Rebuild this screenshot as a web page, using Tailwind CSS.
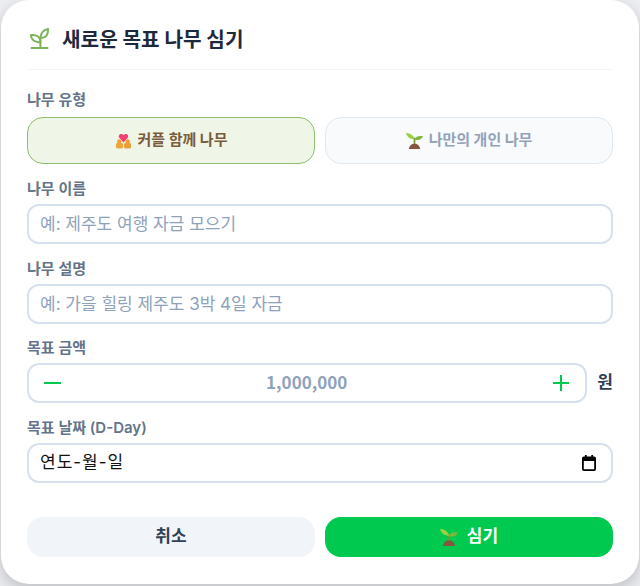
<!DOCTYPE html>
<html lang="ko">
<head>
    <meta charset="UTF-8">
    <title>새로운 목표 나무 심기</title>
    <script src="https://cdn.jsdelivr.net/npm/@tailwindcss/browser@4"></script>
</head>
<body class="h-[586px] w-[640px] overflow-hidden bg-[#eceef2] font-['Inter','Noto_Sans_CJK_KR',sans-serif]">
    <!-- Modal -->
    <div class="mx-px h-[584px] rounded-[28px] bg-white px-[26px] pt-[24px] shadow-[0_6px_16px_rgba(0,0,0,0.2)]">
        <!-- Header -->
        <div class="flex h-[46px] items-start gap-[11px] border-b border-[#f1f5f9]">
            <svg class="mt-[3px] h-6 w-6" viewBox="0 0 24 24" fill="none" stroke="#7cb45c" stroke-width="2" stroke-linecap="round" stroke-linejoin="round">
                <path d="M4.500 21h16"/>
                <path d="M13.500 21c0-3-.5-5 0-10"/>
                <path d="M13.500 15C13.500 10 10 7.500 4 8c0 4.500 4 8 9.500 7Z"/>
                <path d="M13.500 11c0-5 3-8 7.500-9 .5 5-2 9.500-7.500 9Z"/>
            </svg>
            <h1 class="mt-px text-[20.2px] leading-[30px] font-bold text-[#1e293b]">새로운 목표 나무 심기</h1>
        </div>

        <label class="mt-[21px] block text-[15px] leading-[18px] font-semibold text-[#64748b]">나무 유형</label>
        <div class="mt-[8px] grid grid-cols-2 gap-[10px]">
            <button class="flex h-[47px] items-center justify-center gap-[6px] rounded-2xl border border-[#8fbc6e] bg-[#eff6e8] text-[15px] font-bold text-[#7a5c3c]">
                <svg class="h-[17px] w-[17px]" viewBox="0 0 18 18">
                    <path d="M9 11 4.500 6.200C2.800 3.500 6 .5 9 3.200 12 .5 15.200 3.500 13.500 6.200Z" fill="#f43f73"/>
                    <circle cx="4.500" cy="10" r="2.300" fill="#f59e2c"/>
                    <circle cx="13.500" cy="10" r="2.300" fill="#f59e2c"/>
                    <rect x="1" y="11.500" width="7.500" height="6" rx="2" fill="#f2a33a"/>
                    <rect x="9.500" y="11.500" width="7.500" height="6" rx="2" fill="#e8a03c"/>
                </svg>
                커플 함께 나무
            </button>
            <button class="flex h-[47px] items-center justify-center gap-[6px] rounded-2xl border border-[#e2e8f0] bg-[#f8fafc] text-[15px] font-bold text-[#94a3b8]">
                <svg class="h-[17px] w-[17px]" viewBox="0 0 18 18">
                    <path d="M9 14V6" stroke="#7a9a2e" stroke-width="1.800"/>
                    <path d="M9 7.500C8 3.500 4.500 1 0 1c1 4 4.500 7 9 6.500Z" fill="#9ad143"/>
                    <path d="M9 8c1-3 4-4.500 9-3.500C16.500 8 13 9.500 9 8Z" fill="#7cb93a"/>
                    <path d="M3 18c.5-3.500 3-5.500 6-5.500s5.500 2 6 5.500Z" fill="#85553f"/>
                </svg>
                나만의 개인 나무
            </button>
        </div>

        <label class="mt-[16px] block text-[15px] leading-[18px] font-semibold text-[#64748b]">나무 이름</label>
        <input class="mt-[6px] block h-[40px] w-full rounded-xl border-2 border-[#d6e0ee] bg-white px-[11px] text-[17px] placeholder:text-[#8fa2bc]" placeholder="예: 제주도 여행 자금 모으기">

        <label class="mt-[16px] block text-[15px] leading-[18px] font-semibold text-[#64748b]">나무 설명</label>
        <input class="mt-[6px] block h-[40px] w-full rounded-xl border-2 border-[#d6e0ee] bg-white px-[11px] text-[17px] placeholder:text-[#8fa2bc]" placeholder="예: 가을 힐링 제주도 3박 4일 자금">

        <label class="mt-[15px] block text-[15px] leading-[18px] font-semibold text-[#64748b]">목표 금액</label>
        <div class="mt-[6px] flex items-center gap-[10px]">
            <div class="flex h-[40px] flex-1 items-center justify-between rounded-xl border-2 border-[#d6e0ee] pr-[15px] pl-[14px]">
                <svg class="h-[18px] w-[18px]" viewBox="0 0 18 18" stroke="#00c950" stroke-width="2"><path d="M1 9h17"/></svg>
                <span class="-mt-[2px] font-['Noto_Sans_CJK_KR',sans-serif] text-[17px] font-bold text-[#8fa2bc]">1,000,000</span>
                <svg class="h-[18px] w-[18px]" viewBox="0 0 18 18" stroke="#00c950" stroke-width="2"><path d="M1 9h16M9 1v16"/></svg>
            </div>
            <span class="text-[17px] font-bold text-[#334155]">원</span>
        </div>

        <label class="mt-[16px] block text-[15px] leading-[18px] font-semibold text-[#64748b]">목표 날짜 (D-Day)</label>
        <div class="mt-[6px] flex h-[40px] items-center justify-between rounded-xl border-2 border-[#d6e0ee] pr-[14px] pl-[11px]">
            <span class="text-[17px] tracking-[1px] text-[#111]">연도-월-일</span>
            <svg class="h-4 w-4" viewBox="0 0 16 16" fill="none" stroke="#000" stroke-width="1.800">
                <rect x="1.900" y="2.400" width="12.200" height="12.700" rx="1"/>
                <path d="M1.500 4.500h13" stroke-width="3"/>
                <path d="M4.800 0v2M11.200 0v2"/>
            </svg>
        </div>

        <!-- Actions -->
        <div class="mt-[34px] grid grid-cols-2 gap-[10px]">
            <button class="h-[40px] rounded-2xl bg-[#f1f5f9] text-[17px] font-bold text-[#334155]">취소</button>
            <button class="flex h-[40px] items-center justify-center gap-[9px] rounded-2xl bg-[#00c950] text-[17px] font-bold text-white">
                <svg class="h-[18px] w-[18px]" viewBox="0 0 18 18">
                    <path d="M9 14V6" stroke="#7a9a2e" stroke-width="1.800"/>
                    <path d="M9 7.500C8 3.500 4.500 1 0 1c1 4 4.500 7 9 6.500Z" fill="#9ad143"/>
                    <path d="M9 8c1-3 4-4.500 9-3.500C16.500 8 13 9.500 9 8Z" fill="#7cb93a"/>
                    <path d="M3 18c.5-3.500 3-5.500 6-5.500s5.500 2 6 5.500Z" fill="#85553f"/>
                </svg>
                심기
            </button>
        </div>
    </div>
</body>
</html>
